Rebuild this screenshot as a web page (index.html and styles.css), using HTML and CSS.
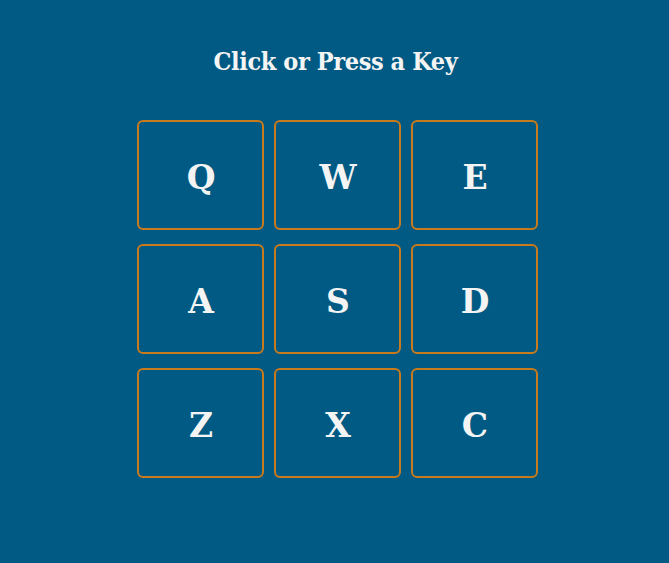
FILE: index.html
```html
<!DOCTYPE html>
<html>
<head>
<meta charset="utf-8">
<link rel="stylesheet" href="styles.css">
</head>
<body>
<main class="app">
  <h1 class="title">Click or Press a Key</h1>
  <div class="pad">
    <button class="key">Q</button>
    <button class="key">W</button>
    <button class="key">E</button>
    <button class="key">A</button>
    <button class="key">S</button>
    <button class="key">D</button>
    <button class="key">Z</button>
    <button class="key">X</button>
    <button class="key">C</button>
  </div>
</main>
</body>
</html>
```

FILE: styles.css
```css
html, body {
  margin: 0;
  height: 100%;
  background: #015a83;
}
body {
  font-family: "DejaVu Serif", serif;
  color: #f4f4f4;
}
.app {
  display: flex;
  flex-direction: column;
  align-items: center;
  padding-top: 45px;
}
.title {
  margin: 0 0 0 2px;
  font-size: 25px;
  font-weight: bold;
  font-stretch: condensed;
  letter-spacing: -0.4px;
  line-height: 34px;
}
.pad {
  margin: 41px 0 0 5px;
  display: grid;
  grid-template-columns: repeat(3, 127px);
  grid-auto-rows: 110px;
  column-gap: 10px;
  row-gap: 14px;
}
.key {
  box-sizing: border-box;
  border: 2px solid #c97a1c;
  border-radius: 6px;
  background: transparent;
  color: #f4f4f4;
  font-family: "DejaVu Serif", serif;
  font-weight: bold;
  font-size: 33px;
  padding: 5px 0 0 2px;
  display: flex;
  align-items: center;
  justify-content: center;
}
```
